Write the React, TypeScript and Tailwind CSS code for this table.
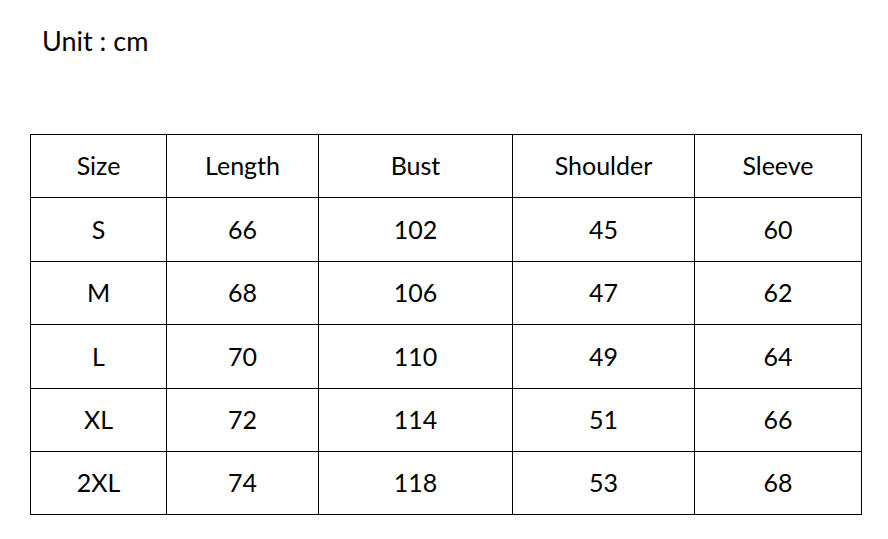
const headers = ['Size', 'Length', 'Bust', 'Shoulder', 'Sleeve']

const rows = [
  ['S', '66', '102', '45', '60'],
  ['M', '68', '106', '47', '62'],
  ['L', '70', '110', '49', '64'],
  ['XL', '72', '114', '51', '66'],
  ['2XL', '74', '118', '53', '68'],
]

export default function App() {
  return (
    <div className="min-h-screen bg-white text-black font-['Lato',sans-serif]">
      <div className="pl-[42px] pt-[26px] text-[27px] leading-[30px]">Unit : cm</div>

      <div className="pl-[30px] pt-[78px]">
        <table className="table-fixed border-collapse w-[831px] text-[25px]">
          <colgroup>
            <col className="w-[136px]" />
            <col className="w-[152px]" />
            <col className="w-[194px]" />
            <col className="w-[182px]" />
            <col className="w-[167px]" />
          </colgroup>
          <tbody>
            <tr className="h-[63.4px]">
              {headers.map(h => (
                <td key={h} className="border border-black text-center align-middle p-0">{h}</td>
              ))}
            </tr>
            {rows.map(row => (
              <tr key={row[0]} className="h-[63.4px]">
                {row.map((cell, i) => (
                  <td key={i} className="border border-black text-center align-middle p-0">{cell}</td>
                ))}
              </tr>
            ))}
          </tbody>
        </table>
      </div>
    </div>
  )
}
